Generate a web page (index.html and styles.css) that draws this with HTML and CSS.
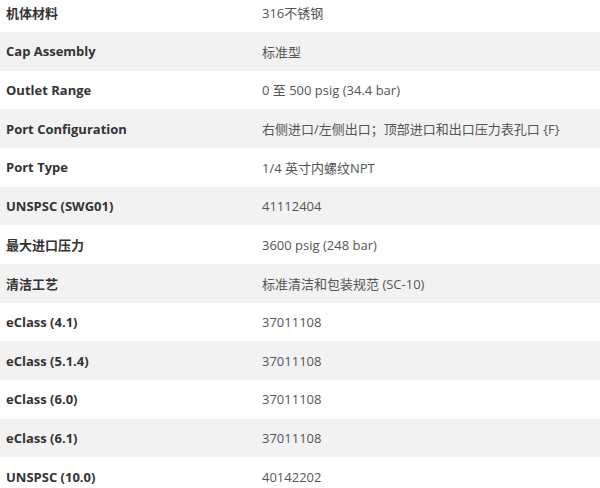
FILE: index.html
```html
<!DOCTYPE html>
<html lang="zh">
<head>
<meta charset="utf-8">
<link rel="stylesheet" href="styles.css">
</head>
<body>
<div class="wrap">
<table class="specs">
<tbody>
<tr><th>机体材料</th><td>316不锈钢</td></tr>
<tr><th>Cap Assembly</th><td>标准型</td></tr>
<tr><th>Outlet Range</th><td>0 至 500 psig (34.4 bar)</td></tr>
<tr><th>Port Configuration</th><td>右侧进口/左侧出口；顶部进口和出口压力表孔口 {F}</td></tr>
<tr><th>Port Type</th><td>1/4 英寸内螺纹NPT</td></tr>
<tr><th>UNSPSC (SWG01)</th><td>41112404</td></tr>
<tr><th>最大进口压力</th><td>3600 psig (248 bar)</td></tr>
<tr><th>清洁工艺</th><td>标准清洁和包装规范 (SC-10)</td></tr>
<tr><th>eClass (4.1)</th><td>37011108</td></tr>
<tr><th>eClass (5.1.4)</th><td>37011108</td></tr>
<tr><th>eClass (6.0)</th><td>37011108</td></tr>
<tr><th>eClass (6.1)</th><td>37011108</td></tr>
<tr><th>UNSPSC (10.0)</th><td>40142202</td></tr>
</tbody>
</table>
</div>
</body>
</html>
```

FILE: styles.css
```css
html, body {
  margin: 0;
  padding: 0;
  background: #fff;
}
body {
  font-family: "Open Sans", "Noto Sans CJK SC", sans-serif;
  font-size: 13px;
  overflow: hidden;
}
.wrap {
  margin-top: -6.67px;
}
.specs {
  width: 600px;
  border-collapse: collapse;
}
.specs tr {
  height: 38.67px;
}
.specs tr:nth-child(even) {
  background: #f2f2f2;
}
.specs th,
.specs td {
  padding: 0 6px;
  text-align: left;
  vertical-align: middle;
}
.specs th {
  width: 244px;
  font-weight: 700;
  color: #333;
}
.specs td {
  font-weight: 400;
  color: #555;
}
```
